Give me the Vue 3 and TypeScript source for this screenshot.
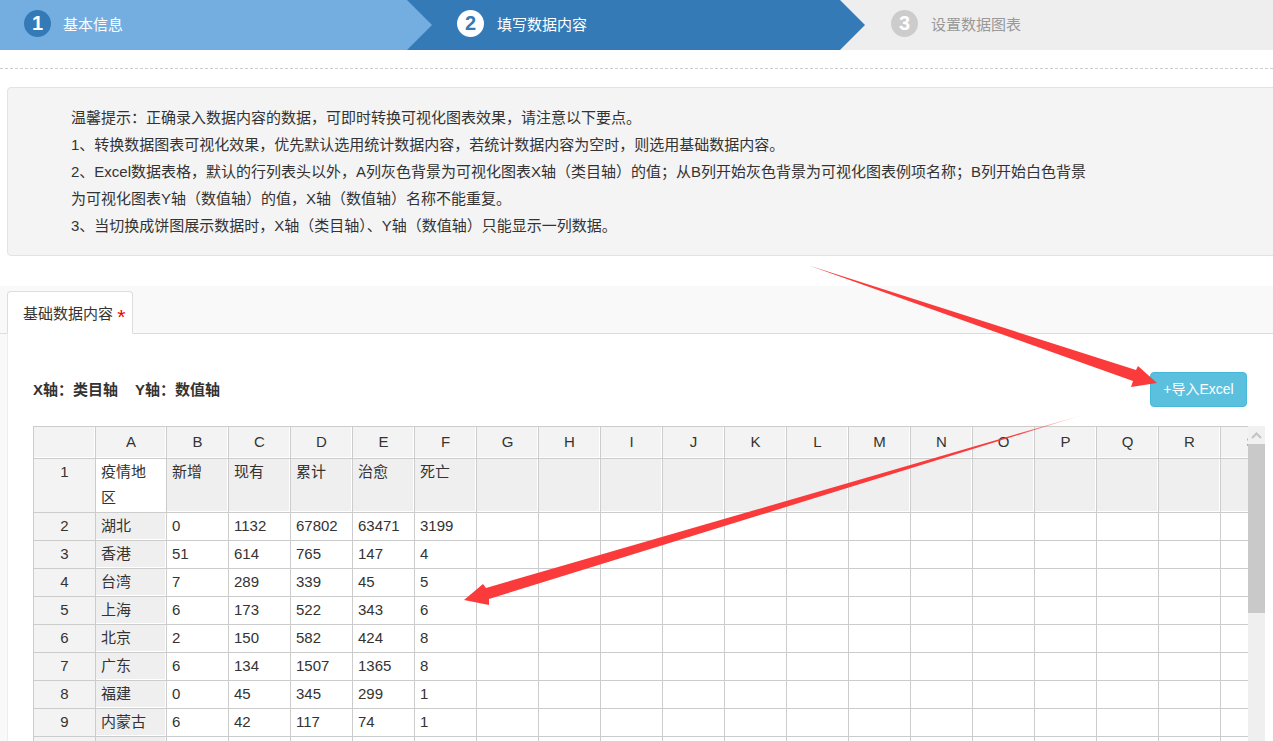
<script setup lang="ts">
const steps = [
  { n: 1, label: '基本信息', cls: 'done' },
  { n: 2, label: '填写数据内容', cls: 'active' },
  { n: 3, label: '设置数据图表', cls: 'todo' },
]
const tips = [
  '温馨提示：正确录入数据内容的数据，可即时转换可视化图表效果，请注意以下要点。',
  '1、转换数据图表可视化效果，优先默认选用统计数据内容，若统计数据内容为空时，则选用基础数据内容。',
  '2、Excel数据表格，默认的行列表头以外，A列灰色背景为可视化图表X轴（类目轴）的值；从B列开始灰色背景为可视化图表例项名称；B列开始白色背景为可视化图表Y轴（数值轴）的值，X轴（数值轴）名称不能重复。',
  '3、当切换成饼图展示数据时，X轴（类目轴）、Y轴（数值轴）只能显示一列数据。',
]
const columns = 'ABCDEFGHIJKLMNOPQRS'.split('')
const rows: string[][] = [
  ['疫情地区', '新增', '现有', '累计', '治愈', '死亡'],
  ['湖北', '0', '1132', '67802', '63471', '3199'],
  ['香港', '51', '614', '765', '147', '4'],
  ['台湾', '7', '289', '339', '45', '5'],
  ['上海', '6', '173', '522', '343', '6'],
  ['北京', '2', '150', '582', '424', '8'],
  ['广东', '6', '134', '1507', '1365', '8'],
  ['福建', '0', '45', '345', '299', '1'],
  ['内蒙古', '6', '42', '117', '74', '1'],
  [],
]
function cellClass(r: number, c: number): string {
  if (r === 0) return c === 0 ? 'selected' : 'grey'
  return c === 0 ? 'grey' : ''
}
</script>

<template>
  <div class="page">
    <div class="steps">
      <div v-for="s in steps" :key="s.n" class="step" :class="s.cls">
        <span class="num">{{ s.n }}</span>
        <span class="step-label">{{ s.label }}</span>
      </div>
    </div>

    <div class="divider"></div>

    <div class="notice">
      <p v-for="t in tips" :key="t">{{ t }}</p>
    </div>

    <section class="data">
      <div class="tabbar">
        <div class="tab">基础数据内容 <span class="star">*</span></div>
      </div>
      <div class="panel">
        <div class="toolbar">
          <div class="axis"><span>X轴：类目轴</span><span>Y轴：数值轴</span></div>
          <button class="import" type="button">+导入Excel</button>
        </div>
        <div class="sheet">
          <table>
            <colgroup>
              <col class="col-head" />
              <col class="col-a" />
              <col v-for="c in columns.slice(1)" :key="c" class="col-n" />
            </colgroup>
            <thead>
              <tr>
                <th></th>
                <th v-for="c in columns" :key="c">{{ c }}</th>
              </tr>
            </thead>
            <tbody>
              <tr v-for="(row, r) in rows" :key="r">
                <th class="row-head">{{ row.length ? r + 1 : '' }}</th>
                <td v-for="(c, i) in columns" :key="c" :class="cellClass(r, i)">{{ row[i] }}</td>
              </tr>
            </tbody>
          </table>
          <div class="scrollbar">
            <div class="up">
              <svg width="11" height="7" viewBox="0 0 11 7"><path d="M1 6 L5.5 1.5 L10 6" fill="none" stroke="#c4c4c4" stroke-width="2" /></svg>
            </div>
            <div class="thumb"></div>
          </div>
        </div>
      </div>
    </section>

    <svg class="arrows" width="1273" height="741" viewBox="0 0 1273 741">
      <defs>
        <linearGradient id="fade" gradientUnits="userSpaceOnUse" x1="1086" y1="414" x2="1015" y2="435">
          <stop offset="0" stop-color="#fb3b3b" stop-opacity="0" />
          <stop offset="1" stop-color="#fb3b3b" />
        </linearGradient>
      </defs>
      <polygon points="809,265.5 1136,370 1138,366 1157,383 1131,387 1133,381" fill="#fb3b3b" />
      <polygon points="1086,414 486,588 483,584 464,600 489,605 489,599" fill="url(#fade)" />
    </svg>
  </div>
</template>

<style>
html, body { margin: 0; overflow: hidden; background: #fff; }
</style>

<style scoped>
.page {
  position: relative;
  width: 1273px;
  height: 741px;
  overflow: hidden;
  font-family: "Liberation Sans", "Noto Sans CJK SC", sans-serif;
  font-size: 15px;
  color: #333;
  background: #fff;
}
.steps { display: flex; height: 50px; }
.step {
  position: relative;
  display: flex;
  align-items: center;
  gap: 12px;
  box-sizing: border-box;
  height: 50px;
  color: #fff;
}
.step.done { width: 407px; padding-left: 24px; background: #74aee0; }
.step.active { width: 433px; padding-left: 50px; gap: 13px; background: #337ab7; }
.step.todo { flex: 1; padding-left: 51px; gap: 13px; background: #eee; color: #999; }
.step.done::after, .step.active::after {
  content: "";
  position: absolute;
  z-index: 1;
  left: 100%;
  top: 0;
  border-style: solid;
  border-width: 25px 0 25px 25px;
  border-color: transparent;
}
.step.done::after { border-left-color: #74aee0; }
.step.active::after { border-left-color: #337ab7; }
.num {
  display: flex;
  align-items: center;
  justify-content: center;
  width: 27px;
  height: 27px;
  margin-top: -3px;
  border-radius: 50%;
  font-size: 20px;
  font-weight: 700;
}
.done .num { background: #337ab7; color: #fff; }
.active .num { background: #fff; color: #337ab7; }
.todo .num { background: #ccc; color: #fff; }
.step-label { line-height: 20px; }
.divider { margin-top: 18px; border-top: 1px dashed #ccc; }
.notice {
  box-sizing: border-box;
  width: 1290px;
  height: 169px;
  margin: 18px 0 0 7px;
  padding: 16px 0 0 63px;
  background: #f4f4f4;
  border: 1px solid #e3e3e3;
  border-radius: 4px;
  line-height: 27px;
}
.notice p { width: 1020px; margin: 0; }
.data { margin-top: 30px; background: #f9f9f9; padding-left: 7px; }
.tabbar {
  display: flex;
  align-items: flex-end;
  box-sizing: border-box;
  height: 48px;
  margin-left: -7px;
  padding-left: 7px;
  border-bottom: 1px solid #ddd;
}
.tab {
  box-sizing: border-box;
  width: 126px;
  height: 43px;
  margin-bottom: -1px;
  padding: 12px 0 0 15px;
  background: #fff;
  border: 1px solid #ddd;
  border-bottom-color: #fff;
  border-radius: 4px 4px 0 0;
  line-height: 20px;
  white-space: nowrap;
}
.star { color: #e00; font-size: 21px; line-height: 10px; vertical-align: -5px; }
.panel {
  height: 420px;
  padding: 38px 0 0 25px;
  background: #fff;
  border-left: 1px solid #eee;
}
.toolbar {
  display: flex;
  align-items: center;
  justify-content: space-between;
  height: 35px;
  margin-bottom: 19px;
  padding-right: 26px;
}
.axis { display: flex; gap: 17px; font-weight: 700; line-height: 36px; }
.import {
  box-sizing: border-box;
  width: 97px;
  height: 35px;
  padding: 0 0 4px;
  background: #5bc0de;
  border: 1px solid #46b8da;
  border-radius: 4px;
  color: #fff;
  font: inherit;
  font-size: 14px;
}
.sheet { position: relative; width: 1232px; height: 315px; overflow: hidden; }
table {
  table-layout: fixed;
  width: 1250px;
  border-collapse: separate;
  border-spacing: 0;
  border-top: 1px solid #ccc;
  border-left: 1px solid #ccc;
  line-height: 26px;
}
.col-head { width: 62px; }
.col-a { width: 71px; }
.col-n { width: 62px; }
th, td {
  box-sizing: border-box;
  height: 28px;
  padding: 0 6px 0 5px;
  border-right: 1px solid #ccc;
  border-bottom: 1px solid #ccc;
  font-weight: 400;
  vertical-align: top;
  overflow: hidden;
}
tbody tr:first-child th, tbody tr:first-child td { height: 54px; }
thead th {
  height: 32px;
  padding: 2px 5px 0;
  text-align: center;
  background: #f3f3f3;
  box-shadow: inset -1px -1px 0 #fff;
}
.row-head { padding: 0 5px; text-align: center; background: #f3f3f3; }
td { background: #fff; }
td.grey { background: #efefef; box-shadow: inset -1px -1px 0 #fff; }
td.selected { background: #fff; }
.scrollbar {
  position: absolute;
  top: 0;
  left: 1215px;
  width: 17px;
  height: 100%;
  background: #efefef;
}
.up {
  display: flex;
  align-items: center;
  justify-content: center;
  height: 18px;
  background: #f1f1f1;
}
.thumb { height: 169px; background: #c9c9c9; }
.arrows { position: absolute; left: 0; top: 0; pointer-events: none; }
</style>
